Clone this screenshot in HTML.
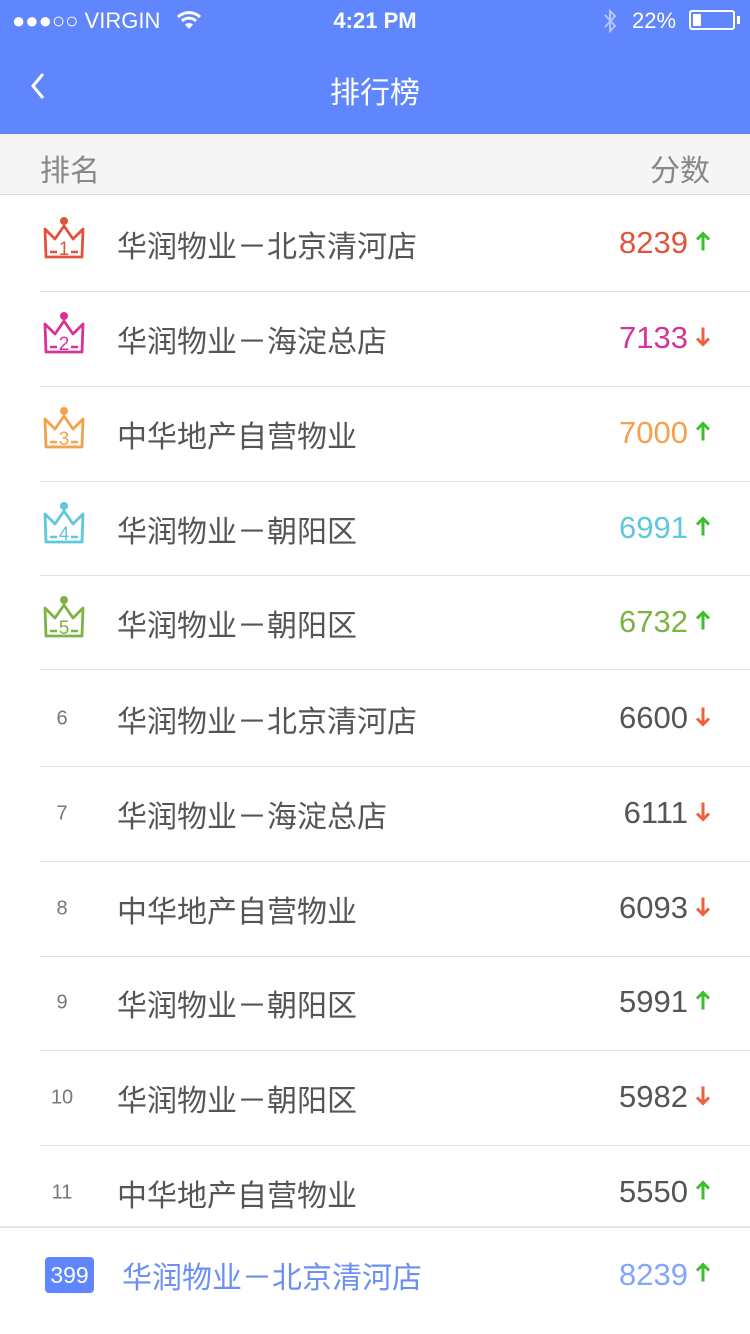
<!DOCTYPE html>
<html><head><meta charset="utf-8"><style>
*{margin:0;padding:0;box-sizing:border-box}
body{width:750px;height:1334px;background:#fff;font-family:"Liberation Sans","Noto Sans CJK SC",sans-serif;position:relative;overflow:hidden}
.hdr{position:absolute;left:0;top:0;width:750px;height:134px;background:#5f86fd;color:#fff}
.sub{position:absolute;left:0;top:134px;width:750px;height:61px;background:#f5f5f5;border-bottom:1px solid #ddd;color:#888;font-size:30px}
.sep{position:absolute;left:40px;right:0;height:1px;background:#e2e2e2}
.name{position:absolute;left:117px;font-size:30px;color:#555;transform:translateY(-50%)}
.score{position:absolute;right:62px;font-size:31px;color:#555;transform:translateY(-50%)}
.arr{position:absolute;left:694px;transform:translateY(-50%)}
.num{position:absolute;left:40px;width:44px;text-align:center;font-size:20px;color:#777;transform:translateY(-50%)}
.crown{position:absolute;left:42px}
</style></head><body>
<div class="hdr">
<div style="position:absolute;left:12px;top:8px;font-size:22px">●●●○○ VIRGIN</div>
<svg style="position:absolute;left:176px;top:10px" width="26" height="20" viewBox="0 0 26 20"><path d="M2 7 A16 16 0 0 1 24 7" stroke="#fff" stroke-width="3" fill="none"/><path d="M6 11 A10 10 0 0 1 20 11" stroke="#fff" stroke-width="3" fill="none"/><path d="M13 19 L9 14.5 A6 6 0 0 1 17 14.5Z" fill="#fff"/></svg>
<div style="position:absolute;left:0;width:750px;text-align:center;top:8px;font-size:22px;font-weight:bold">4:21 PM</div>
<svg style="position:absolute;left:602px;top:8px" width="16" height="26" viewBox="0 0 16 26"><path d="M3 7 L13 18 L8 23 L8 3 L13 8 L3 19" stroke="#b5c6fe" stroke-width="2" fill="none"/></svg>
<div style="position:absolute;left:632px;top:8px;font-size:22px">22%</div>
<div style="position:absolute;left:689px;top:10px;width:46px;height:20px;border:2px solid #fff;border-radius:3px"><div style="position:absolute;left:2px;top:2px;width:8px;height:12px;background:#fff"></div></div>
<div style="position:absolute;left:737px;top:16px;width:3px;height:8px;background:#fff"></div>
<svg style="position:absolute;left:28px;top:72px" width="20" height="28" viewBox="0 0 20 28"><path d="M15 2 L5 14 L15 26" stroke="#fff" stroke-width="3" fill="none"/></svg>
<div style="position:absolute;left:0;width:750px;text-align:center;top:68px;font-size:30px">排行榜</div>
</div>
<div class="sub"><span style="position:absolute;left:40px;top:12px">排名</span><span style="position:absolute;right:40px;top:12px">分数</span></div>
<div id="list"></div>
<div style="position:absolute;left:0;top:1226px;width:750px;height:2px;background:#e6e6e6"></div>
<div style="position:absolute;left:45px;top:1257px;width:49px;height:36px;background:#5f86fd;border-radius:4px;color:#fff;font-size:23px;text-align:center;line-height:36px">399</div>
<div class="name" style="left:122px;top:1275px;color:#6b8ff5;font-size:30px">华润物业－北京清河店</div>
<div class="score" style="top:1275px;color:#84a4ff">8239</div>
<div class="arr" style="top:1275px"><svg width="18" height="22" viewBox="0 0 18 22"><path d="M9 20 V3 M3 9 L9 3 L15 9" stroke="#3cbf2c" stroke-width="3" fill="none"/></svg></div>
<script>
var d=[["华润物业－北京清河店","8239",1,"#e0533e"],["华润物业－海淀总店","7133",0,"#d6339a"],["中华地产自营物业","7000",1,"#f6a04a"],["华润物业－朝阳区","6991",1,"#5fc8dc"],["华润物业－朝阳区","6732",1,"#7cb342"],["华润物业－北京清河店","6600",0],["华润物业－海淀总店","6111",0],["中华地产自营物业","6093",0],["华润物业－朝阳区","5991",1],["华润物业－朝阳区","5982",0],["中华地产自营物业","5550",1]];
var ys=[244,339,434,529,623,719,814,909,1003,1098,1193],seps=[291,386,481,575,669,766,861,956,1050,1145],h="";
d.forEach(function(r,i){var y=ys[i];
if(r[3]){var c=r[3];h+='<svg class="crown" style="top:'+(y-29)+'px" width="44" height="46" viewBox="0 0 44 46"><circle cx="22" cy="6" r="4" fill="'+c+'"/><path d="M3 14 L13 24 L22 11 L31 24 L41 14 L40 42 L4 42 Z" stroke="'+c+'" stroke-width="2.8" fill="none" stroke-linejoin="round"/><path d="M8 37 H15 M29 37 H36" stroke="'+c+'" stroke-width="2.4"/><text x="22" y="40" font-size="19" text-anchor="middle" fill="'+c+'" font-family="Liberation Sans">'+(i+1)+'</text></svg>';}
else h+='<div class="num" style="top:'+y+'px">'+(i+1)+'</div>';
h+='<div class="name" style="top:'+y+'px">'+r[0]+'</div><div class="score" style="top:'+(y-1)+'px;color:'+(r[3]||'#555')+'">'+r[1]+'</div>';
h+='<div class="arr" style="top:'+y+'px">'+(r[2]?'<svg width="18" height="22" viewBox="0 0 18 22"><path d="M9 20 V3 M3 9 L9 3 L15 9" stroke="#3cbf2c" stroke-width="3" fill="none"/></svg>':'<svg width="18" height="22" viewBox="0 0 18 22"><path d="M9 2 V19 M3 13 L9 19 L15 13" stroke="#f0603c" stroke-width="3" fill="none"/></svg>')+'</div>';
if(i<10)h+='<div class="sep" style="top:'+seps[i]+'px"></div>';});
document.getElementById("list").innerHTML=h;
</script>
</body></html>
